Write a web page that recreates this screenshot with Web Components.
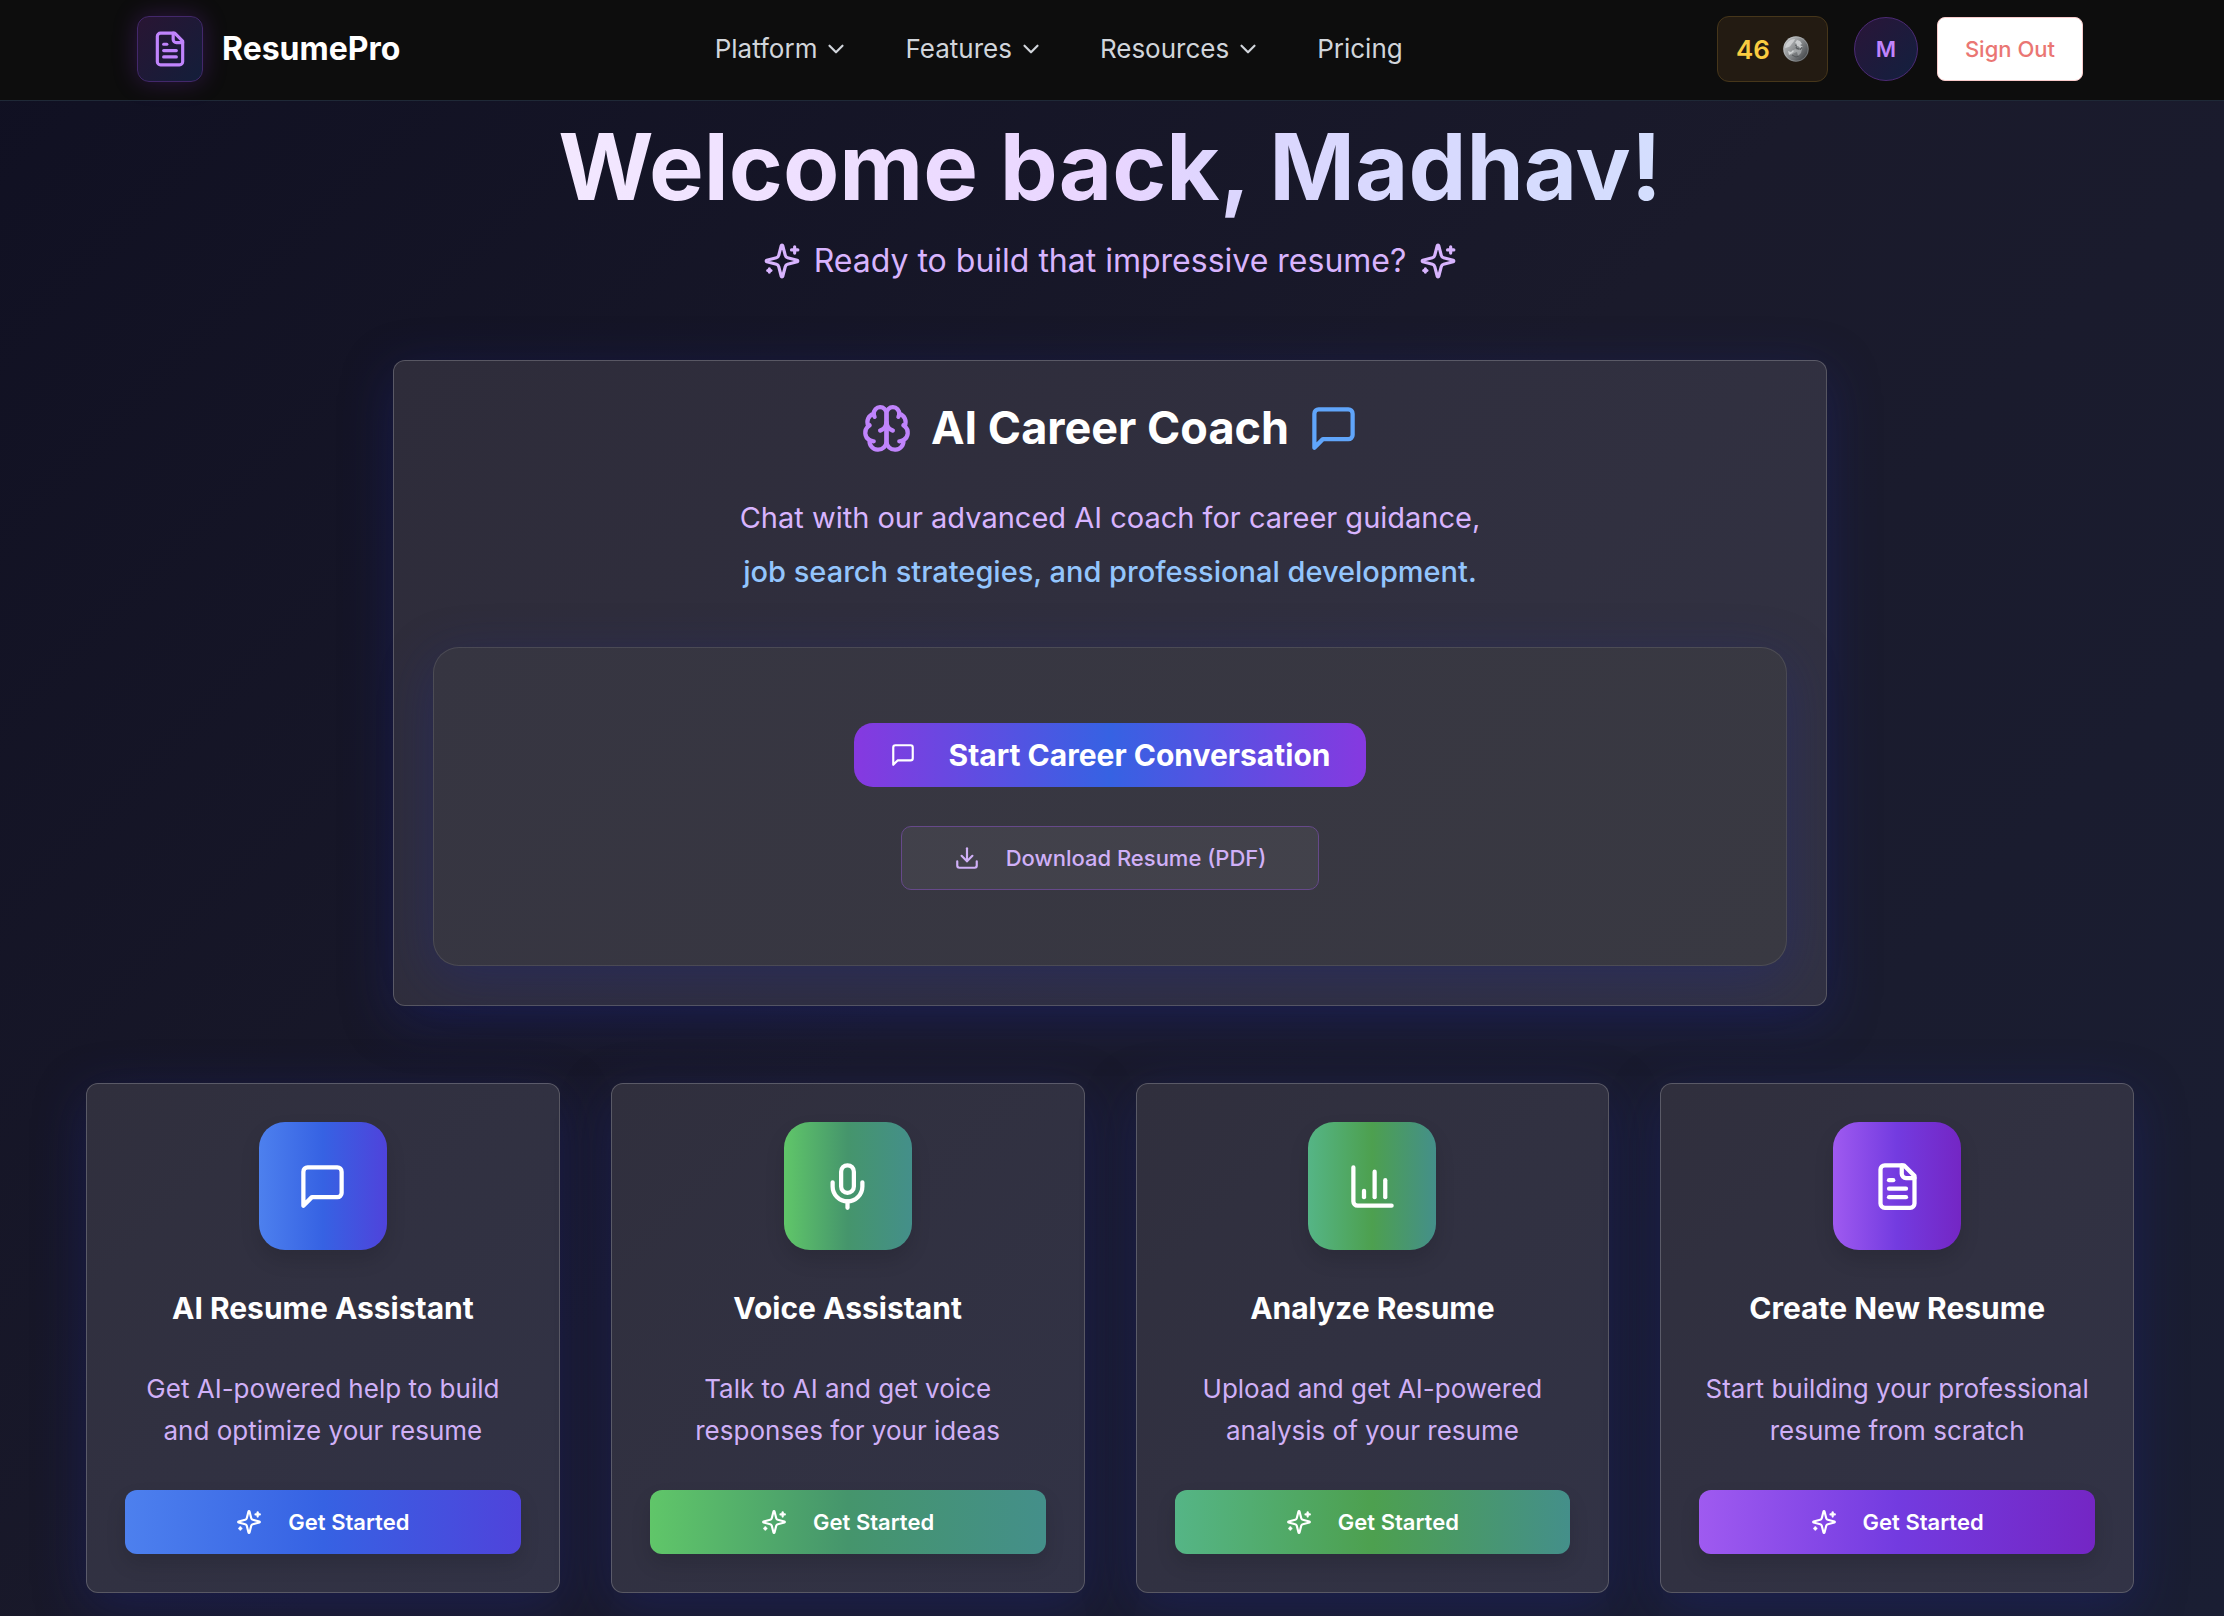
<!DOCTYPE html>
<html lang="en">
<head>
<meta charset="utf-8">
<meta name="viewport" content="width=device-width, initial-scale=1">
<title>ResumePro</title>
<style>
  html { background: #141426; }
  body {
    margin: 0;
    font-family: Inter, "Liberation Sans", sans-serif;
    -webkit-font-smoothing: antialiased;
    color: #fff;
  }
</style>
</head>
<body>
<rp-app></rp-app>
<script>
const ICONS = {
  file: '<path d="M15 2H6a2 2 0 0 0-2 2v16a2 2 0 0 0 2 2h12a2 2 0 0 0 2-2V7Z"/><path d="M14 2v4a2 2 0 0 0 2 2h4"/><path d="M10 9H8"/><path d="M16 13H8"/><path d="M16 17H8"/>',
  chevron: '<path d="m6 9 6 6 6-6"/>',
  sparkles: '<path d="M9.937 15.5A2 2 0 0 0 8.5 14.063l-6.135-1.582a.5.5 0 0 1 0-.962L8.5 9.936A2 2 0 0 0 9.937 8.5l1.582-6.135a.5.5 0 0 1 .963 0L14.063 8.5A2 2 0 0 0 15.5 9.937l6.135 1.581a.5.5 0 0 1 0 .964L15.5 14.063a2 2 0 0 0-1.437 1.437l-1.582 6.135a.5.5 0 0 1-.963 0z"/><path d="M20 3v4"/><path d="M22 5h-4"/><path d="M4 17v2"/><path d="M5 18H3"/>',
  brain: '<path d="M12 5a3 3 0 1 0-5.997.125 4 4 0 0 0-2.526 5.77 4 4 0 0 0 .556 6.588A4 4 0 1 0 12 18Z"/><path d="M12 5a3 3 0 1 1 5.997.125 4 4 0 0 1 2.526 5.77 4 4 0 0 1-.556 6.588A4 4 0 1 1 12 18Z"/><path d="M15 13a4.5 4.5 0 0 1-3-4 4.5 4.5 0 0 1-3 4"/><path d="M17.599 6.5a3 3 0 0 0 .399-1.375"/><path d="M6.003 5.125A3 3 0 0 0 6.401 6.5"/><path d="M3.477 10.896a4 4 0 0 1 .585-.396"/><path d="M19.938 10.5a4 4 0 0 1 .585.396"/><path d="M6 18a4 4 0 0 1-1.967-.516"/><path d="M19.967 17.484A4 4 0 0 1 18 18"/>',
  message: '<path d="M21 15a2 2 0 0 1-2 2H7l-4 4V5a2 2 0 0 1 2-2h14a2 2 0 0 1 2 2z"/>',
  download: '<path d="M21 15v4a2 2 0 0 1-2 2H5a2 2 0 0 1-2-2v-4"/><path d="m7 10 5 5 5-5"/><path d="M12 15V3"/>',
  mic: '<path d="M12 2a3 3 0 0 0-3 3v7a3 3 0 0 0 6 0V5a3 3 0 0 0-3-3Z"/><path d="M19 10v2a7 7 0 0 1-14 0v-2"/><path d="M12 19v3"/>',
  chart: '<path d="M3 3v16a2 2 0 0 0 2 2h16"/><path d="M18 17V9"/><path d="M13 17V5"/><path d="M8 17v-3"/>'
};

function define(name, render) {
  customElements.define(name, class extends HTMLElement {
    connectedCallback() {
      if (this.shadowRoot) return;
      this.attachShadow({ mode: 'open' }).innerHTML = render(this);
    }
  });
}

define('rp-icon', el => `
  <style>
    :host { display: block; flex: none; width: var(--icon-size, 26px); height: var(--icon-size, 26px); }
    svg { display: block; width: 100%; height: 100%; fill: none; stroke: currentColor; stroke-width: 2; stroke-linecap: round; stroke-linejoin: round; }
  </style>
  <svg viewBox="0 0 24 24" aria-hidden="true">${ICONS[el.getAttribute('name')]}</svg>`);

define('rp-coin', () => `
  <style>:host { display: block; width: 26px; height: 26px; } svg { display: block; }</style>
  <svg width="26" height="26" viewBox="0 0 26 26" aria-hidden="true">
    <defs>
      <linearGradient id="g" x1="0" y1="0.1" x2="1" y2="0.9">
        <stop offset="0" stop-color="#c9cbcc"/><stop offset=".45" stop-color="#8d9092"/><stop offset="1" stop-color="#36393c"/>
      </linearGradient>
    </defs>
    <circle cx="13" cy="13" r="12.8" fill="url(#g)"/>
    <circle cx="13" cy="13" r="12.2" fill="none" stroke="#d8dadb" stroke-opacity=".35" stroke-width=".8"/>
    <path d="M2 12C3 6 8 3 12 3c-1 3-3 4-4 6s-3 2-6 3z" fill="#e4e6e7" fill-opacity=".6"/>
    <path d="M14 4l3 1 2 3-2 1 3 2-3 1-2-2-2 1 1-3-2-1z" fill="#dcdfe0" fill-opacity=".75"/>
    <path d="M12 13l3 1 4-1-1 4-3 3-1-4-3 1-3 2 1-3z" fill="#b9bcbe" fill-opacity=".6"/>
    <path d="M5 15l3 1 2-2 1 1-3 3-2 1z" fill="#f0f2f3" fill-opacity=".65"/>
    <path d="M12 9l2 1-1 2 3 1M17 14l2-3M9 19l4 2 3-1" fill="none" stroke="#4c5053" stroke-width=".8"/>
  </svg>`);

define('rp-nav-item', el => `
  <style>
    :host { display: block; }
    button, a {
      display: flex; align-items: center; gap: 6px; padding: 0; border: 0; background: none;
      font-family: inherit; font-size: 26px; line-height: 40px; font-weight: 400;
      color: #d1d5db; text-decoration: none; cursor: pointer;
    }
  </style>
  ${el.hasAttribute('href')
    ? `<a href="${el.getAttribute('href')}"><slot></slot></a>`
    : `<button type="button" aria-haspopup="true"><slot></slot><rp-icon name="chevron"></rp-icon></button>`}`);

define('rp-header', () => `
  <style>
    :host {
      display: flex; align-items: center; justify-content: space-between;
      height: 100px; padding: 0 141px 2px 137px; box-sizing: border-box;
      background: #0d0d0d; box-shadow: 0 1px 0 #1f2937; position: relative;
    }
    .brand { display: flex; align-items: center; gap: 19px; color: #fff; text-decoration: none; font-weight: 700; font-size: 32px; line-height: 40px; }
    .mark {
      display: grid; place-items: center; box-sizing: border-box; width: 66px; height: 66px;
      border: 1px solid #43286b; border-radius: 12px;
      background: linear-gradient(135deg, #291533, #131e3a);
      box-shadow: 0 0 24px rgba(147, 51, 234, .25);
      color: #c084fc; --icon-size: 38px;
    }
    nav { display: flex; align-items: center; gap: 56px; }
    .account { display: flex; align-items: center; }
    .credits {
      display: flex; align-items: center; gap: 13px; box-sizing: border-box; height: 66px; padding: 0 18px;
      border: 1px solid #46361a; border-radius: 12px; background: #231b12;
      color: #facc40; font-weight: 600; font-size: 26px;
    }
    .avatar {
      box-sizing: border-box; width: 64px; height: 64px; margin: 0 19px 0 26px; padding: 0;
      border: 1px solid #4c2a75; border-radius: 50%;
      background: linear-gradient(135deg, #2a1538, #12203f);
      color: #c084fc; font-family: inherit; font-weight: 600; font-size: 22px;
    }
    .out {
      height: 64px; padding: 0 27px; border: 1px solid #f8caca; border-radius: 8px; background: #fff;
      color: #ea7673; font-family: inherit; font-weight: 500; font-size: 22px;
    }
  </style>
  <a class="brand" href="#"><span class="mark"><rp-icon name="file"></rp-icon></span>ResumePro</a>
  <nav>
    <rp-nav-item>Platform</rp-nav-item>
    <rp-nav-item>Features</rp-nav-item>
    <rp-nav-item>Resources</rp-nav-item>
    <rp-nav-item href="#pricing">Pricing</rp-nav-item>
  </nav>
  <div class="account">
    <div class="credits">46<rp-coin></rp-coin></div>
    <button class="avatar" type="button">M</button>
    <button class="out" type="button">Sign Out</button>
  </div>`);

define('rp-hero', () => `
  <style>
    :host { display: flex; flex-direction: column; align-items: center; }
    h1 {
      margin: 0; font-size: 92px; line-height: 120px; font-weight: 700; white-space: nowrap;
      background: linear-gradient(90deg, #f3e8ff, #e9d5ff 50%, #dbd6fe 62%, #d4defe);
      -webkit-background-clip: text; background-clip: text; color: transparent;
    }
    p { display: flex; align-items: center; gap: 13px; margin: 11px 0 0; color: #d8b4fe; font-size: 32px; line-height: 46px; --icon-size: 38px; }
  </style>
  <h1>Welcome back, Madhav!</h1>
  <p><rp-icon name="sparkles"></rp-icon>Ready to build that impressive resume?<rp-icon name="sparkles"></rp-icon></p>`);

define('rp-coach', () => `
  <style>
    :host {
      display: block; box-sizing: border-box; width: 100%; max-width: 1434px; padding: 39px; text-align: center;
      border: 1px solid rgba(255,255,255,.2); border-radius: 12px;
      background: linear-gradient(135deg, #2e2c3a, #323243);
      box-shadow: 0 13px 51px rgba(31, 38, 135, .37);
    }
    h2 { display: flex; align-items: center; justify-content: center; gap: 19px; margin: 1px 0 0; font-size: 45px; line-height: 54px; font-weight: 700; --icon-size: 51px; }
    .brain { color: #c084fc; } .chat { color: #60a5fa; }
    p { margin: 36px 0 0; font-size: 29px; line-height: 54px; color: #d8b4fe; }
    strong { display: block; font-weight: 500; color: #93c5fd; }
    .panel {
      display: flex; flex-direction: column; align-items: center; gap: 39px; margin-top: 48px; padding: 75px 20px;
      border: 1px solid rgba(255,255,255,.1); border-radius: 26px;
      background: linear-gradient(135deg, #363541, #393942);
      box-shadow: 0 13px 51px rgba(31, 38, 135, .37);
    }
    button { display: flex; align-items: center; box-sizing: border-box; height: 64px; font-family: inherit; cursor: pointer; }
    .start { gap: 33px; padding: 0 36px; border: 0; border-radius: 19px; background: linear-gradient(90deg, #8639e0, #3662e3 50%, #8639e0); color: #fff; font-size: 30px; font-weight: 700; }
    .pdf { gap: 26px; padding: 0 52px; border: 1px solid #66498a; border-radius: 10px; background: rgba(255,255,255,.05); color: #d0b0f7; font-size: 22px; font-weight: 500; }
  </style>
  <h2><rp-icon class="brain" name="brain"></rp-icon>AI Career Coach<rp-icon class="chat" name="message"></rp-icon></h2>
  <p>Chat with our advanced AI coach for career guidance, <strong>job search strategies, and professional development.</strong></p>
  <div class="panel">
    <button class="start" type="button"><rp-icon name="message"></rp-icon>Start Career Conversation</button>
    <button class="pdf" type="button"><rp-icon name="download"></rp-icon>Download Resume (PDF)</button>
  </div>`);

define('rp-tool-card', el => `
  <style>
    :host {
      display: flex; flex-direction: column; align-items: center; box-sizing: border-box; padding: 38px; text-align: center;
      border: 1px solid rgba(255,255,255,.2); border-radius: 12px;
      background: linear-gradient(135deg, #302f3d, #323346);
      box-shadow: 0 13px 51px rgba(31, 38, 135, .37);
    }
    .tile {
      display: grid; place-items: center; width: 128px; height: 128px; border-radius: 26px;
      background: var(--tone); box-shadow: 0 10px 20px rgba(0,0,0,.12); --icon-size: 51px;
    }
    h3 { margin: 42px 0 0; font-size: 30px; line-height: 32px; font-weight: 700; }
    p { margin: 44px 0 38px; max-width: 394px; font-size: 26px; line-height: 42px; color: #d0b0f7; text-wrap: balance; }
    button {
      display: flex; align-items: center; justify-content: center; gap: 26px; width: 100%; height: 64px; padding: 0;
      border: 0; border-radius: 12px; background: var(--tone); box-shadow: 0 10px 20px rgba(0,0,0,.12);
      color: #fff; font-family: inherit; font-size: 22px; font-weight: 600; cursor: pointer;
    }
  </style>
  <div class="tile"><rp-icon name="${el.getAttribute('icon')}"></rp-icon></div>
  <h3>${el.getAttribute('heading')}</h3>
  <p><slot></slot></p>
  <button type="button"><rp-icon name="sparkles"></rp-icon>Get Started</button>`);

define('rp-app', () => `
  <style>
    :host { display: block; min-height: 100vh; background: linear-gradient(135deg, #101022 0%, #1a1a2b 50%, #1a1e33 100%); }
    main { display: flex; flex-direction: column; align-items: center; padding: 7px 90px 22px 86px; }
    rp-coach { margin-top: 76px; }
    .tools { display: grid; grid-template-columns: repeat(4, minmax(0, 1fr)); gap: 51px; align-self: stretch; margin-top: 77px; }
    .blue { --tone: linear-gradient(90deg, #4d80ee, #3662e3 50%, #4f43db); }
    .green { --tone: linear-gradient(90deg, #60c669, #45956c 50%, #448f8a); }
    .leaf { --tone: linear-gradient(90deg, #55b586, #4da04f 50%, #448f8a); }
    .violet { --tone: linear-gradient(90deg, #9f5af0, #733be0 50%, #7426c4); }
  </style>
  <rp-header></rp-header>
  <main>
    <rp-hero></rp-hero>
    <rp-coach></rp-coach>
    <div class="tools">
      <rp-tool-card class="blue" icon="message" heading="AI Resume Assistant">Get AI-powered help to build and optimize your resume</rp-tool-card>
      <rp-tool-card class="green" icon="mic" heading="Voice Assistant">Talk to AI and get voice responses for your ideas</rp-tool-card>
      <rp-tool-card class="leaf" icon="chart" heading="Analyze Resume">Upload and get AI-powered analysis of your resume</rp-tool-card>
      <rp-tool-card class="violet" icon="file" heading="Create New Resume">Start building your professional resume from scratch</rp-tool-card>
    </div>
  </main>`);
</script>
</body>
</html>
